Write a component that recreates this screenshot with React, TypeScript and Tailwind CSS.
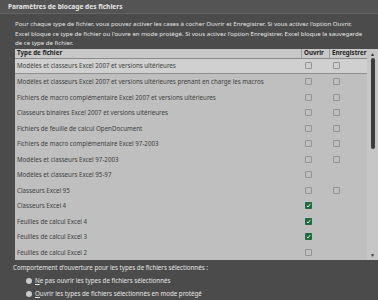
import * as React from "react";

type Row = { name: string; open: "on" | "off" | "none"; save: "off" | "none" };

const rows: Row[] = [
  { name: "Modèles et classeurs Excel 2007 et versions ultérieures", open: "off", save: "off" },
  { name: "Modèles et classeurs Excel 2007 et versions ultérieures prenant en charge les macros", open: "off", save: "off" },
  { name: "Fichiers de macro complémentaire Excel 2007 et versions ultérieures", open: "off", save: "off" },
  { name: "Classeurs binaires Excel 2007 et versions ultérieures", open: "off", save: "off" },
  { name: "Fichiers de feuille de calcul OpenDocument", open: "off", save: "off" },
  { name: "Fichiers de macro complémentaire Excel 97-2003", open: "off", save: "off" },
  { name: "Modèles et classeurs Excel 97-2003", open: "off", save: "off" },
  { name: "Modèles et classeurs Excel 95-97", open: "off", save: "none" },
  { name: "Classeurs Excel 95", open: "off", save: "off" },
  { name: "Classeurs Excel 4", open: "on", save: "none" },
  { name: "Feuilles de calcul Excel 4", open: "on", save: "none" },
  { name: "Feuilles de calcul Excel 3", open: "on", save: "none" },
  { name: "Feuilles de calcul Excel 2", open: "off", save: "none" },
];

function Box({ checked }: { checked: boolean }) {
  if (checked) {
    return (
      <span className="flex h-[7px] w-[7px] items-center justify-center rounded-[1px] bg-[#1f6b3f]">
        <svg width="5" height="5" viewBox="0 0 10 10">
          <path d="M1.5 5.5 L4 8 L8.5 2" stroke="#e8f5ec" strokeWidth="1.8" fill="none" />
        </svg>
      </span>
    );
  }
  return <span className="block h-[7px] w-[7px] rounded-[1px] border border-[#939393]" />;
}

function Radio({ children }: { children?: React.ReactNode }) {
  return (
    <div className="flex h-[13px] items-center pl-[26px]">
      <span className="mr-[3px] block h-[6px] w-[6px] rounded-full bg-[#c9c9c9]" />
      {children && <span>{children}</span>}
    </div>
  );
}

export default function App() {
  return (
    <div
      className="h-[300px] w-[378px] overflow-hidden bg-[#4b4b4b] text-[#e6e6e6]"
      style={{ fontFamily: '"Noto Sans", "Open Sans", sans-serif' }}
    >
      <div className="flex h-[14px] items-center border-b border-[#656565] bg-[#545454] pl-[8px] text-[6.6px] font-bold">
        Paramètres de blocage des fichiers
      </div>

      <p className="pl-[15px] pt-[5px] text-[6.1px] leading-[9.5px] whitespace-nowrap">
        Pour chaque type de fichier, vous pouvez activer les cases à cocher Ouvrir et Enregistrer. Si vous activez l'option Ouvrir,
        <br />
        Excel bloque ce type de fichier ou l'ouvre en mode protégé. Si vous activez l'option Enregistrer, Excel bloque la sauvegarde
        <br />
        de ce type de fichier.
      </p>

      <div className="ml-[15px] mt-[1px] flex w-[363px] bg-[#bfbfbf] text-[6.2px] text-[#404040]">
        <div className="flex-1">
          <div className="flex h-[10px] border-b border-[#8a8a8a] bg-[#c8c8c8] font-bold text-[#222]">
            <div className="flex w-[287px] items-center border-r border-[#9a9a9a] pl-[2px]">Type de fichier</div>
            <div className="flex w-[28px] items-center border-r border-[#9a9a9a] pl-[2px]">Ouvrir</div>
            <div className="flex flex-1 items-center pl-[2px]">Enregistrer</div>
          </div>
          {rows.map((r, i) => (
            <div
              key={r.name}
              className={
                i === 0
                  ? "flex h-[15.5px] items-center border-b border-[#8f8f8f] bg-[#d0d0d0]"
                  : "flex h-[15.5px] items-center"
              }
            >
              <div className="w-[287px] overflow-hidden whitespace-nowrap pl-[2px]">{r.name}</div>
              <div className="flex w-[28px] pl-[3px]">
                {r.open !== "none" && <Box checked={r.open === "on"} />}
              </div>
              <div className="flex flex-1 pl-[3px]">
                {r.save !== "none" && <Box checked={false} />}
              </div>
            </div>
          ))}
        </div>
        <div className="flex w-[11px] flex-col items-center bg-[#c6c6c6] pt-[2px] pb-[2px]">
          <span className="text-[5px] leading-[6px] text-[#333]">▲</span>
          <span className="mt-[1px] block h-[91px] w-[4px] rounded-[2px] bg-[#3c3c3c]" />
          <span className="flex-1" />
          <span className="text-[5px] leading-[6px] text-[#333]">▼</span>
        </div>
      </div>

      <div className="pl-[13px] pt-[3px] text-[6.2px] leading-[10px]">
        Comportement d'ouverture pour les types de fichiers sélectionnés :
      </div>
      <div className="pt-[1px] text-[6.2px]">
        <Radio>
          <span className="underline">N</span>e pas ouvrir les types de fichiers sélectionnés
        </Radio>
        <Radio>
          <span className="underline">O</span>uvrir les types de fichiers sélectionnés en mode protégé
        </Radio>
        <Radio />
      </div>
    </div>
  );
}
